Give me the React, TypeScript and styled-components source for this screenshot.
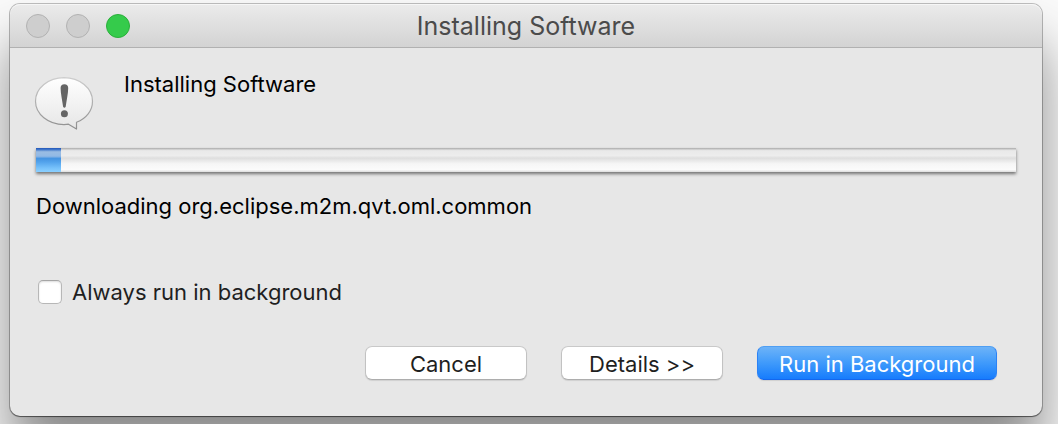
import React, { useState } from "react";
import styled, { createGlobalStyle } from "styled-components";

const GlobalStyle = createGlobalStyle`
  * { box-sizing: border-box; }
  body {
    margin: 0;
    background: #fafafa;
    font-family: Inter, "Liberation Sans", sans-serif;
    font-size: 22px;
    line-height: 28px;
    color: #000;
    overflow: hidden;
  }
`;

const Desktop = styled.main`
  padding: 4px 16px 8px 10px;
`;

const Window = styled.section`
  border-radius: 10px;
  background: #e7e7e7;
  box-shadow: 0 0 0 1px rgba(0, 0, 0, 0.24), 0 1px 1px rgba(0, 0, 0, 0.4),
    0 40px 54px rgba(0, 0, 0, 0.45);
`;

const TitleBar = styled.header`
  display: grid;
  grid-template-columns: 1fr auto 1fr;
  align-items: center;
  height: 44px;
  padding: 0 16px;
  border-bottom: 1px solid #b1b1b1;
  border-radius: 10px 10px 0 0;
  background: linear-gradient(#ebebeb, #d3d3d3);
  box-shadow: inset 0 1px 0 #f6f6f6;
`;

const Lights = styled.div`
  display: flex;
  gap: 16px;
`;

const Light = styled.button<{ $on?: boolean }>`
  width: 24px;
  height: 24px;
  padding: 0;
  border: 1px solid ${(p) => (p.$on ? "#2aaf3a" : "#b2b2b2")};
  border-radius: 50%;
  background: ${(p) => (p.$on ? "#35cb4b" : "#cecece")};
`;

const Title = styled.h1`
  margin: 0;
  font-size: 25px;
  font-weight: 400;
  line-height: 32px;
  color: #4b4b4b;
`;

const Content = styled.div`
  display: flex;
  flex-direction: column;
  padding: 22px 26px 36px;
`;

const Message = styled.div`
  display: flex;
  gap: 28px;
  height: 78px;
`;

const Icon = styled.svg`
  width: 60px;
  height: 60px;
  margin-top: 4px;
  overflow: visible;
`;

const Text = styled.p`
  margin: 0;
`;

const Progress = styled.progress`
  appearance: none;
  display: block;
  width: 100%;
  height: 24px;
  border: 0;
  margin-bottom: 20px;
  box-shadow: 0 2px 3px rgba(0, 0, 0, 0.5);
  background: none;

  &::-webkit-progress-bar {
    background: linear-gradient(#a9a9a9 0, #c9c9c9 5%, #e9e9e9 11%, #ededed 32%, #dedede 42%, #e6e6e6 50%, #f6f6f6 66%, #fbfbfb 90%, #dddddd 100%);
  }
  &::-webkit-progress-value {
    background: linear-gradient(#2255b8 0, #3c73c9 6%, #9abce3 16%, #92b9e5 34%, #4594e2 44%, #55a5ed 60%, #78c2fb 84%, #8bd0ff 100%);
  }
`;

const CheckLabel = styled.label`
  display: flex;
  align-items: center;
  gap: 10px;
  align-self: flex-start;
  margin: 58px 0 40px;
  padding-left: 2px;
  color: #1f1f1f;
`;

const Checkbox = styled.input`
  appearance: none;
  width: 24px;
  height: 24px;
  margin: 0;
  border: 1px solid #b7b7b7;
  border-top-color: #a5a5a5;
  border-radius: 5px;
  background: #fff;
  box-shadow: inset 0 1px 2px rgba(0, 0, 0, 0.14);

  &:checked {
    background: #2f8cfb;
  }
`;

const Actions = styled.footer`
  display: flex;
  justify-content: flex-end;
  gap: 34px;
  padding-right: 19px;
`;

const Button = styled.button<{ $primary?: boolean }>`
  width: ${(p) => (p.$primary ? 240 : 162)}px;
  height: 34px;
  padding: 2px 0 0;
  border: 1px solid;
  border-color: ${(p) => (p.$primary ? "#4f9ff3 #2b82f6 #1467ee" : "#c9c9c9 #c2c2c2 #adadad")};
  border-radius: 7px;
  background: ${(p) => (p.$primary ? "linear-gradient(#6db3f8, #3f9afb 50%, #167cfd)" : "#fff")};
  box-shadow: 0 1px 1px rgba(0, 0, 0, 0.1);
  font: inherit;
  color: ${(p) => (p.$primary ? "#fff" : "#1f1f1f")};
`;

const NoticeIcon = () => (
  <Icon viewBox="0 0 60 60" aria-hidden="true">
    <defs>
      <linearGradient id="bubble" x1="0" y1="0" x2="0" y2="1">
        <stop offset="0" stopColor="#ffffff" />
        <stop offset="1" stopColor="#e6e6e6" />
      </linearGradient>
      <linearGradient id="rim" x1="0" y1="0" x2="0" y2="1">
        <stop offset="0" stopColor="#cdcdcd" />
        <stop offset="1" stopColor="#8f8f8f" />
      </linearGradient>
    </defs>
    <path
      d="M28 3.700C12.300 3.700 -.5 14.200 -.5 27.200S12.300 50.400 28 50.600Q30.500 50.600 32.500 50.200L40.500 55V48.300C50.300 44.600 56.500 36.600 56.500 27.200 56.500 14.200 43.700 3.700 28 3.700Z"
      fill="url(#bubble)"
      stroke="url(#rim)"
      strokeWidth="1.200"
      strokeLinejoin="round"
    />
    <path
      d="M28.400 10.200c2.400 0 3.900 1.400 3.800 3.700 0 5.500-1.800 13-2.500 18.800q-1.300 2-2.600 0c-.7-5.800-2.500-13.300-2.500-18.800-.1-2.300 1.400-3.700 3.800-3.700Z"
      fill="#656565"
    />
    <circle cx="28.400" cy="39.700" r="3.500" fill="#656565" />
  </Icon>
);

export default function App() {
  const [background, setBackground] = useState(false);

  return (
    <>
      <GlobalStyle />
      <Desktop>
        <Window aria-labelledby="window-title">
          <TitleBar>
            <Lights>
              <Light type="button" aria-label="Close" />
              <Light type="button" aria-label="Minimize" />
              <Light type="button" aria-label="Zoom" $on />
            </Lights>
            <Title id="window-title">Installing Software</Title>
          </TitleBar>
          <Content>
            <Message>
              <NoticeIcon />
              <Text>Installing Software</Text>
            </Message>
            <Progress value={25} max={980} aria-label="Installation progress" />
            <Text>Downloading org.eclipse.m2m.qvt.oml.common</Text>
            <CheckLabel>
              <Checkbox
                type="checkbox"
                checked={background}
                onChange={(e) => setBackground(e.target.checked)}
              />
              Always run in background
            </CheckLabel>
            <Actions>
              <Button type="button">Cancel</Button>
              <Button type="button">Details &gt;&gt;</Button>
              <Button type="button" $primary>Run in Background</Button>
            </Actions>
          </Content>
        </Window>
      </Desktop>
    </>
  );
}
